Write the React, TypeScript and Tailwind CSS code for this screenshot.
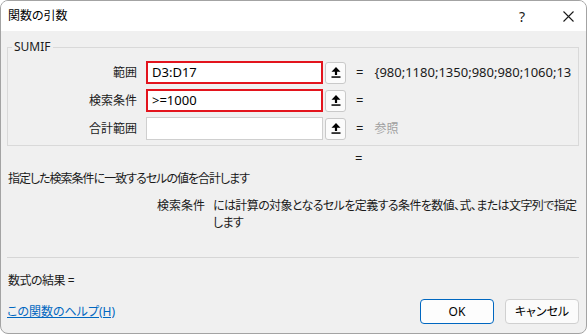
import React from "react";

const font = "font-['Noto_Sans','Noto_Sans_CJK_JP',sans-serif] [font-feature-settings:'palt']";

function RefButton() {
  return (
    <div className="w-[21px] h-[22px] ml-[2px] flex items-center justify-center bg-[#fbfbfb] border border-[#c9c9c9] rounded-[3px]">
      <svg width="10" height="11" viewBox="0 0 10 11">
        <polygon points="5,0 9.5,4.8 6.1,4.8 6.1,8 3.9,8 3.9,4.8 0.5,4.8" fill="#000" />
        <rect x="0.5" y="9.3" width="9" height="1.5" fill="#000" />
      </svg>
    </div>
  );
}

function ArgRow({ label, value, red, result, muted }: { label: string; value: string; red?: boolean; result: string; muted?: boolean }) {
  return (
    <div className="flex items-center h-[23px]">
      <div className="w-[130px] text-right text-[12px] text-[#1a1a1a] pr-[1px]">{label}</div>
      <div
        className={
          red
            ? "ml-[8px] w-[177px] h-[23px] bg-white border-2 border-[#e3141d] flex items-center pl-[4px] text-[13px] text-black"
            : "ml-[8px] w-[177px] h-[23px] bg-white border border-[#cfcfcf] flex items-center pl-[5px] text-[13px] text-black"
        }
      >
        {value}
      </div>
      <RefButton />
      <div className="ml-[10px] text-[13px] text-[#1a1a1a]">=</div>
      <div className={muted ? "ml-[11px] text-[12px] text-[#a0a0a0] whitespace-nowrap" : "ml-[11px] text-[13px] text-[#1a1a1a] whitespace-nowrap"}>
        {result}
      </div>
    </div>
  );
}

export default function App() {
  return (
    <div className={`w-[587px] h-[334px] bg-white ${font}`}>
      <div className="h-full flex flex-col rounded-[8px] border border-[#a3a3a3] overflow-hidden bg-[#f0f0f0]">
        {/* Title bar */}
        <div className="h-[30px] bg-white flex items-center pl-[7px] pr-[12px]">
          <span className="text-[12px] text-black">関数の引数</span>
          <span className="ml-auto text-[14px] text-[#1a1a1a]">?</span>
          <svg className="ml-[38px]" width="11" height="11" viewBox="0 0 11 11">
            <path d="M0.5 0.5 L10.5 10.5 M10.5 0.5 L0.5 10.5" stroke="#1a1a1a" strokeWidth="1.1" />
          </svg>
        </div>

        {/* Body */}
        <div className="flex-1 flex flex-col pl-[6px] pr-[7px] pt-[8px]">
          <fieldset className="border border-[#d9d9d9] pt-[6px] pb-[5px]">
            <legend className="ml-[4px] px-[2px] text-[12px] leading-[16px] text-[#1a1a1a]">SUMIF</legend>
            <div className="flex flex-col gap-[5px]">
              <ArgRow label="範囲" value="D3:D17" red result="{980;1180;1350;980;980;1060;13" />
              <ArgRow label="検索条件" value=">=1000" red result="" />
              <ArgRow label="合計範囲" value="" result="参照" muted />
            </div>
          </fieldset>

          <div className="mt-[4px] ml-[348px] text-[13px] leading-[16px] text-[#1a1a1a]">=</div>

          <div className="mt-[5px] pl-[1px] text-[12px] leading-[16px] tracking-[-1px] text-[#1a1a1a]">
            指定した検索条件に一致するセルの値を合計します
          </div>

          <div className="mt-[10px] flex text-[12px] leading-[17px] text-[#1a1a1a]">
            <div className="ml-[150px] w-[56px] shrink-0">検索条件</div>
            <div className="w-[366px] tracking-[-0.6px]">
              <div className="whitespace-nowrap">には計算の対象となるセルを定義する条件を数値、式、または文字列で指定</div>
              <div>します</div>
            </div>
          </div>

          <div className="mt-[26px] h-px bg-[#d6d6d6]" />

          <div className="mt-[15px] pl-[1px] text-[12px] leading-[16px] tracking-[-0.5px] text-[#1a1a1a]">数式の結果 =</div>

          <div className="mt-[10px] flex items-center">
            <a href="#" className="text-[12px] text-[#0067c0] underline">この関数のヘルプ(H)</a>
            <div className="ml-auto flex gap-[11px]">
              <button className="w-[74px] h-[25px] rounded-[4px] border border-[#0067c0] bg-[#fdfdfd] text-[12px] text-black">OK</button>
              <button className="w-[74px] h-[25px] rounded-[4px] border border-[#d0d0d0] bg-[#fbfbfb] text-[12px] text-black">キャンセル</button>
            </div>
          </div>
        </div>
      </div>
    </div>
  );
}
